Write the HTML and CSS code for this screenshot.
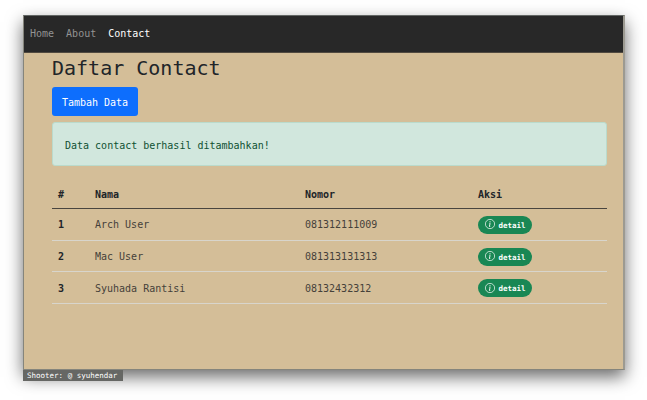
FILE: index.html
```html
<!DOCTYPE html>
<html lang="id">
<head>
<meta charset="utf-8">
<title>Daftar Contact</title>
<link rel="stylesheet" href="styles.css">
</head>
<body>
<svg class="sprite" aria-hidden="true"><symbol id="info" viewBox="0 0 16 16"><circle cx="8" cy="8" r="7.4" fill="none" stroke="currentColor" stroke-width="1.1"/><path d="M8.9 6.6 6.6 6.9l-.1.4.5.1c.3.1.3.2.3.4l-.8 3.5c-.2.9.1 1.3.8 1.3.5 0 1.2-.2 1.4-.6l.1-.5c-.5.4-.9.3-.8-.2z" fill="currentColor"/><circle cx="8" cy="4.5" r="1" fill="currentColor"/></symbol></svg>
<div class="window">
  <nav class="navbar"><a>Home</a><a>About</a><a class="active">Contact</a></nav>
  <main class="container">
    <h1>Daftar Contact</h1>
    <a class="button">Tambah Data</a>
    <div class="alert">Data contact berhasil ditambahkan!</div>
    <table>
      <thead><tr><th class="col-id">#</th><th class="col-name">Nama</th><th class="col-number">Nomor</th><th>Aksi</th></tr></thead>
      <tbody>
        <tr><th>1</th><td>Arch User</td><td>081312111009</td><td><a class="badge"><svg><use href="#info"/></svg>detail</a></td></tr>
        <tr><th>2</th><td>Mac User</td><td>081313131313</td><td><a class="badge"><svg><use href="#info"/></svg>detail</a></td></tr>
        <tr><th>3</th><td>Syuhada Rantisi</td><td>08132432312</td><td><a class="badge"><svg><use href="#info"/></svg>detail</a></td></tr>
      </tbody>
    </table>
  </main>
</div>
<footer class="credit">Shooter: @ syuhendar</footer>
</body>
</html>
```
FILE: styles.css
```css
* { box-sizing: border-box; }
body {
  margin: 0;
  padding: 15px 23px 0;
  height: 400px;
  overflow: hidden;
  background: #fff;
  color: #212529;
  font: 10px/15px "DejaVu Sans Mono", monospace;
}
.sprite { display: none; }
.window {
  width: 602px;
  height: 355px;
  border: 1px solid #85857c;
  border-right: 2px solid #9c9a91;
  border-top-color: #626664;
  background: #d4be98;
  box-shadow: 0 7px 16px rgba(0, 0, 0, .58);
}
.navbar {
  display: flex;
  align-items: center;
  gap: 12px;
  height: 37px;
  padding: 0 6px 2px;
  background: #282828;
  border-bottom: 1px solid #514a40;
  color: #939393;
}
.active { color: #fff; }
.container { padding: 3px 16px 0 28px; }
h1 {
  margin: 0 0 6px;
  font-size: 20px;
  line-height: 25px;
  font-weight: 400;
}
.button {
  display: block;
  width: 86px;
  height: 29px;
  border-radius: 3px;
  background: #0d6efd;
  color: #fff;
  line-height: 31px;
  text-align: center;
}
.alert {
  height: 44px;
  margin: 6px 0 13px;
  padding: 15px 12px;
  border: 1px solid #badbcc;
  border-radius: 3px;
  background: #d1e7dd;
  color: #0f5132;
}
table {
  width: 555px;
  table-layout: fixed;
  border-collapse: separate;
  border-spacing: 0;
}
th, td {
  height: 31.7px;
  padding: 1px 6px 0;
  border-bottom: 1px solid #d8d5cc;
  text-align: left;
  vertical-align: middle;
}
td { color: #45413a; }
thead th {
  height: 30px;
  border-bottom-color: #49453f;
}
.col-id { width: 37px; }
.col-name { width: 210px; }
.col-number { width: 173px; }
.badge {
  display: flex;
  align-items: center;
  gap: 3.5px;
  width: 54px;
  height: 18px;
  padding: 1px 0 0 7px;
  border-radius: 9px;
  background: #198754;
  color: #fff;
  font-size: 7.5px;
  font-weight: 700;
}
.badge svg {
  width: 10px;
  height: 10px;
  flex: none;
  margin-top: -2px;
}
.credit {
  position: relative;
  width: 100px;
  height: 11px;
  padding-left: 4px;
  background: #666764;
  color: #fff;
  font-size: 7.5px;
  line-height: 11px;
}
```
